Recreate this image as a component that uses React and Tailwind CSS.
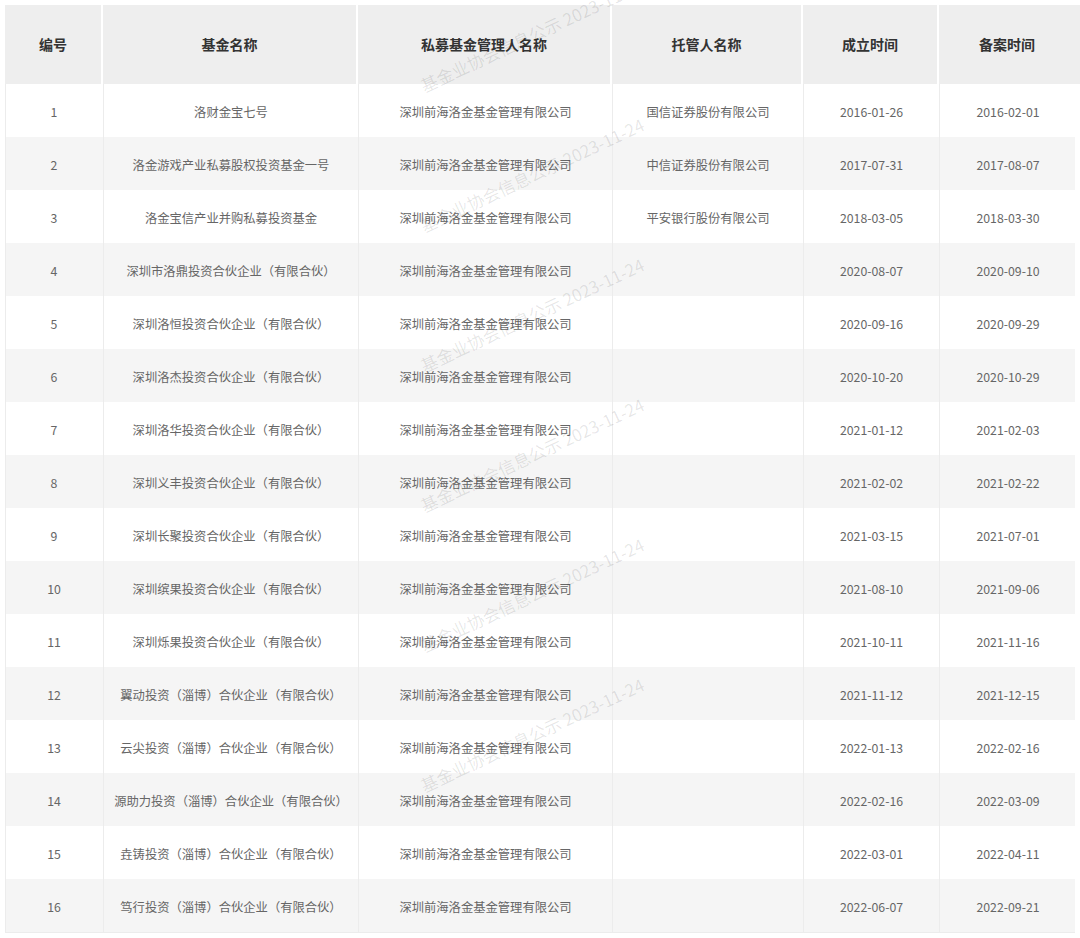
const MANAGER = "深圳前海洛金基金管理有限公司";

const rows = [
  ["1", "洛财金宝七号", MANAGER, "国信证券股份有限公司", "2016-01-26", "2016-02-01"],
  ["2", "洛金游戏产业私募股权投资基金一号", MANAGER, "中信证券股份有限公司", "2017-07-31", "2017-08-07"],
  ["3", "洛金宝信产业并购私募投资基金", MANAGER, "平安银行股份有限公司", "2018-03-05", "2018-03-30"],
  ["4", "深圳市洛鼎投资合伙企业（有限合伙）", MANAGER, "", "2020-08-07", "2020-09-10"],
  ["5", "深圳洛恒投资合伙企业（有限合伙）", MANAGER, "", "2020-09-16", "2020-09-29"],
  ["6", "深圳洛杰投资合伙企业（有限合伙）", MANAGER, "", "2020-10-20", "2020-10-29"],
  ["7", "深圳洛华投资合伙企业（有限合伙）", MANAGER, "", "2021-01-12", "2021-02-03"],
  ["8", "深圳义丰投资合伙企业（有限合伙）", MANAGER, "", "2021-02-02", "2021-02-22"],
  ["9", "深圳长聚投资合伙企业（有限合伙）", MANAGER, "", "2021-03-15", "2021-07-01"],
  ["10", "深圳缤果投资合伙企业（有限合伙）", MANAGER, "", "2021-08-10", "2021-09-06"],
  ["11", "深圳烁果投资合伙企业（有限合伙）", MANAGER, "", "2021-10-11", "2021-11-16"],
  ["12", "翼动投资（淄博）合伙企业（有限合伙）", MANAGER, "", "2021-11-12", "2021-12-15"],
  ["13", "云尖投资（淄博）合伙企业（有限合伙）", MANAGER, "", "2022-01-13", "2022-02-16"],
  ["14", "源助力投资（淄博）合伙企业（有限合伙）", MANAGER, "", "2022-02-16", "2022-03-09"],
  ["15", "垚铸投资（淄博）合伙企业（有限合伙）", MANAGER, "", "2022-03-01", "2022-04-11"],
  ["16", "笃行投资（淄博）合伙企业（有限合伙）", MANAGER, "", "2022-06-07", "2022-09-21"],
];

const headers = ["编号", "基金名称", "私募基金管理人名称", "托管人名称", "成立时间", "备案时间"];

const COLS = "grid grid-cols-[98px_255px_254px_191px_136px_136px]";
const WM = "基金业协会信息公示 2023-11-24";

export default function App() {
  return (
    <div className="relative w-[1080px] h-[938px] bg-white overflow-hidden font-['Noto_Sans_CJK_SC','Noto_Sans',sans-serif]">
      <div className="pt-[5px] pl-[5px]">
        {/* header */}
        <div className={`${COLS} h-[79px] bg-[#eeeeee]`}>
          {headers.map((h, i) => (
            <div
              key={h}
              className={`flex items-center justify-center text-[14px] font-bold text-[#333] ${i < 5 ? "border-r-2 border-white" : ""}`}
            >
              {h}
            </div>
          ))}
        </div>
        {/* body */}
        <div className="w-[1070px] border-l border-b border-[#ececec]">
          {rows.map((r, ri) => (
            <div key={r[0]} className={`${COLS} h-[53px] ${ri % 2 === 1 ? "bg-[#f5f5f5]" : "bg-white"}`}>
              {r.map((c, ci) => (
                <div
                  key={ci}
                  className={`flex items-center justify-center pt-[4px] text-[12.3px] text-[#666] ${ci < 5 ? "border-r border-[#ececec]" : ""} ${ci === 0 ? "-ml-px" : ""}`}
                >
                  {c}
                </div>
              ))}
            </div>
          ))}
        </div>
      </div>

      {/* watermark overlay */}
      <div className="pointer-events-none absolute left-[532px] top-[35px] flex flex-col gap-[140px] text-[17px] text-black/10 whitespace-nowrap">
        {[0, 1, 2, 3, 4, 5].map((i) => (
          <div key={i} className="h-0 w-0 flex items-center justify-center">
            <span className="-rotate-[25deg]">{WM}</span>
          </div>
        ))}
      </div>
    </div>
  );
}
